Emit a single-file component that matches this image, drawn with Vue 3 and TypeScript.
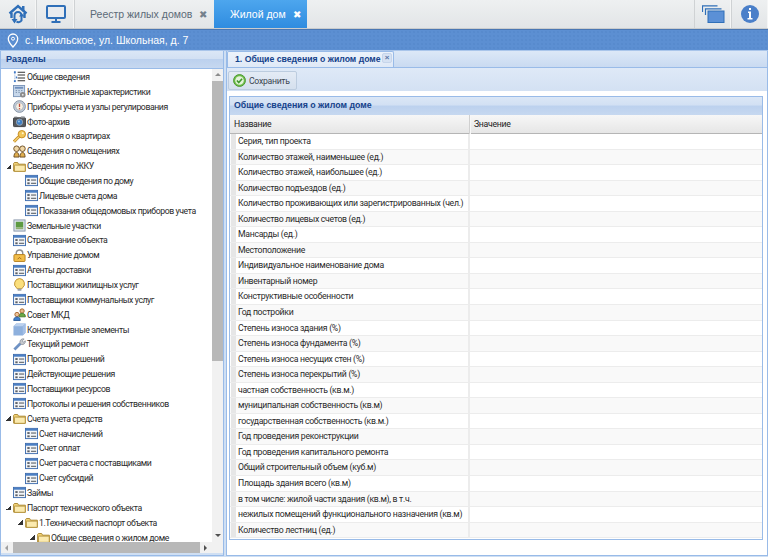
<script setup lang="ts">
interface TreeRow { label: string; icon: string; level: number; open?: boolean }
const tree: TreeRow[] = [
  { label: 'Общие сведения', icon: 'list', level: 0 },
  { label: 'Конструктивные характеристики', icon: 'calc', level: 0 },
  { label: 'Приборы учета и узлы регулирования', icon: 'gauge', level: 0 },
  { label: 'Фото-архив', icon: 'camera', level: 0 },
  { label: 'Сведения о квартирах', icon: 'key', level: 0 },
  { label: 'Сведения о помещениях', icon: 'people', level: 0 },
  { label: 'Сведения по ЖКУ', icon: 'folder', level: 0, open: true },
  { label: 'Общие сведения по дому', icon: 'form', level: 1 },
  { label: 'Лицевые счета дома', icon: 'form', level: 1 },
  { label: 'Показания общедомовых приборов учета', icon: 'form', level: 1 },
  { label: 'Земельные участки', icon: 'land', level: 0 },
  { label: 'Страхование объекта', icon: 'form', level: 0 },
  { label: 'Управление домом', icon: 'lock', level: 0 },
  { label: 'Агенты доставки', icon: 'form', level: 0 },
  { label: 'Поставщики жилищных услуг', icon: 'bulb', level: 0 },
  { label: 'Поставщики коммунальных услуг', icon: 'form', level: 0 },
  { label: 'Совет МКД', icon: 'council', level: 0 },
  { label: 'Конструктивные элементы', icon: 'cube', level: 0 },
  { label: 'Текущий ремонт', icon: 'wrench', level: 0 },
  { label: 'Протоколы решений', icon: 'form', level: 0 },
  { label: 'Действующие решения', icon: 'form', level: 0 },
  { label: 'Поставщики ресурсов', icon: 'form', level: 0 },
  { label: 'Протоколы и решения собственников', icon: 'form', level: 0 },
  { label: 'Счета учета средств', icon: 'folder', level: 0, open: true },
  { label: 'Счет начислений', icon: 'form', level: 1 },
  { label: 'Счет оплат', icon: 'form', level: 1 },
  { label: 'Счет расчета с поставщиками', icon: 'form', level: 1 },
  { label: 'Счет субсидий', icon: 'form', level: 1 },
  { label: 'Займы', icon: 'form', level: 0 },
  { label: 'Паспорт технического объекта', icon: 'folder', level: 0, open: true },
  { label: '1.Технический паспорт объекта', icon: 'folder', level: 1, open: true },
  { label: 'Общие сведения о жилом доме', icon: 'folder', level: 2, open: true },
]
const rows: string[] = [
  'Серия, тип проекта',
  'Количество этажей, наименьшее (ед.)',
  'Количество этажей, наибольшее (ед.)',
  'Количество подъездов (ед.)',
  'Количество проживающих или зарегистрированных (чел.)',
  'Количество лицевых счетов (ед.)',
  'Мансарды (ед.)',
  'Местоположение',
  'Индивидуальное наименование дома',
  'Инвентарный номер',
  'Конструктивные особенности',
  'Год постройки',
  'Степень износа здания (%)',
  'Степень износа фундамента (%)',
  'Степень износа несущих стен (%)',
  'Степень износа перекрытий (%)',
  'частная собственность (кв.м.)',
  'муниципальная собственность (кв.м)',
  'государственная собственность (кв.м.)',
  'Год проведения реконструкции',
  'Год проведения капитального ремонта',
  'Общий строительный объем (куб.м)',
  'Площадь здания всего (кв.м)',
  'в том числе: жилой части здания (кв.м), в т.ч.',
  'нежилых помещений функционального назначения (кв.м)',
  'Количество лестниц (ед.)',
]
function indent(level: number): string {
  return `${5 + level * 12}px`
}
</script>

<template>
  <div class="app">
    <svg class="defs" width="0" height="0" aria-hidden="true">
      <defs>
        <symbol id="i-list" viewBox="0 0 14 14">
          <path d="M2 1v12" stroke="#7a9bc8" fill="none" stroke-dasharray="1 1"/>
          <path d="M5 2.500h8M5 5.500h8M5 8.500h8M5 11.500h8" stroke="#333" stroke-width="1.100"/>
          <rect x="1" y="1.500" width="2" height="2" fill="#3f79c7"/>
          <rect x="3" y="7" width="1.500" height="2" fill="#3f79c7"/>
          <rect x="1" y="11" width="2" height="2" fill="#3f79c7"/>
        </symbol>
        <symbol id="i-calc" viewBox="0 0 14 14">
          <rect x=".5" y=".5" width="12" height="12" fill="#c7d7ea" stroke="#7a94b8"/>
          <rect x="2" y="2" width="9" height="2" fill="#6f8fbd"/>
          <path d="M3 6h1M6 6h1M9 6h1M3 8h1M6 8h1" stroke="#55708f"/>
          <circle cx="10.500" cy="10.500" r="3" fill="#8a8a8a"/>
          <circle cx="10.500" cy="10.500" r="1" fill="#e4e4e4"/>
        </symbol>
        <symbol id="i-gauge" viewBox="0 0 14 14">
          <circle cx="7" cy="7" r="6.300" fill="#c3cfdf" stroke="#7f8c9c"/>
          <circle cx="7" cy="7" r="4.200" fill="#f6f0e2" stroke="#a7b0bb"/>
          <path d="M7 4v3.500" stroke="#c0483a" stroke-width="1.400"/>
          <circle cx="7" cy="9.400" r=".8" fill="#c0483a"/>
        </symbol>
        <symbol id="i-camera" viewBox="0 0 14 14">
          <rect x=".5" y="3" width="13" height="9.500" rx="1" fill="#55585c" stroke="#3a3c40"/>
          <rect x="1.500" y="1.800" width="3" height="1.400" fill="#77797d"/>
          <rect x="8.500" y="1.500" width="4" height="2" fill="#8d9094"/>
          <circle cx="7" cy="7.700" r="3.400" fill="#3f7fc4" stroke="#98a4b0"/>
          <circle cx="6.400" cy="7" r="1" fill="#9cc7ee"/>
        </symbol>
        <symbol id="i-key" viewBox="0 0 14 14">
          <path d="M1 12.500l5.500-5.500" stroke="#c58a1f" stroke-width="3.200" fill="none"/>
          <path d="M1.300 12.300l5.300-5.300" stroke="#f4d377" stroke-width="1.400" fill="none"/>
          <circle cx="9.500" cy="4.500" r="4" fill="#f1c659" stroke="#c58a1f"/>
          <circle cx="10.500" cy="3.500" r="1.100" fill="#fff5d0"/>
        </symbol>
        <symbol id="i-people" viewBox="0 0 14 14">
          <circle cx="3.800" cy="4" r="3" fill="#f0d7a6" stroke="#6b4c22"/>
          <circle cx="10.200" cy="4" r="3" fill="#f0d7a6" stroke="#6b4c22"/>
          <path d="M1 13c0-3 1-5 2.800-5S6.500 10 6.500 13zM7.500 13c0-3 1-5 2.800-5S13 10 13 13z" fill="#dfae4f" stroke="#6b4c22"/>
        </symbol>
        <symbol id="i-folder" viewBox="0 0 14 14">
          <path d="M.7 3.500V12h12.600V4.500H6L5 2.700H1.500z" fill="#f3d479" stroke="#a98630"/>
          <path d="M1.500 12.200V6.500q0-1 1-1h10.700V12.200z" fill="#fbeaaf" stroke="#b4913a"/>
        </symbol>
        <symbol id="i-form" viewBox="0 0 14 14">
          <rect x=".5" y="1.500" width="13" height="11" fill="#f2f4f7" stroke="#3d6cae"/>
          <rect x="1" y="2" width="12" height="2" fill="#4a7fc4"/>
          <rect x="2.500" y="5.500" width="2.500" height="2" fill="#5a5f66"/>
          <rect x="2.500" y="9" width="2.500" height="2" fill="#5a5f66"/>
          <path d="M6.500 6.500h5.500M6.500 10h5.500" stroke="#40464d"/>
        </symbol>
        <symbol id="i-land" viewBox="0 0 14 14">
          <rect x="1" y="1" width="12" height="12" fill="#dde4ec" stroke="#8796a8"/>
          <rect x="3" y="3" width="8" height="6" fill="#5d9a42"/>
          <path d="M3 9h8v2H3z" fill="#8fb070"/>
        </symbol>
        <symbol id="i-lock" viewBox="0 0 14 14">
          <path d="M3.500 6.500V4.500a3.500 3.500 0 017 0v2" fill="none" stroke="#8d8f93" stroke-width="1.600"/>
          <rect x="1" y="6" width="12" height="7.500" rx="1" fill="#f1bd4a" stroke="#b57e1c"/>
          <path d="M5 11l2-2 2 2" stroke="#a3691a" fill="none"/>
        </symbol>
        <symbol id="i-bulb" viewBox="0 0 14 14">
          <path d="M7 .6a5.600 5.600 0 00-3.200 10l.7 1h5l.7-1A5.600 5.600 0 007 .6z" fill="#fbdf7c" stroke="#bc8f2c"/>
          <rect x="5" y="11.500" width="4" height="2.200" fill="#9aa0a8"/>
        </symbol>
        <symbol id="i-council" viewBox="0 0 14 14">
          <circle cx="9.800" cy="3.200" r="2.300" fill="#e9b98a" stroke="#a8662c"/>
          <path d="M6.500 9.500c0-3 1.500-3.800 3.300-3.800s3.500.8 3.500 3.800z" fill="#69a843" stroke="#477a2c"/>
          <circle cx="4.300" cy="7" r="2.300" fill="#efc59a" stroke="#a8662c"/>
          <path d="M.8 13.500c0-3 1.500-3.800 3.500-3.800s3.500.8 3.500 3.800z" fill="#3f7fcb" stroke="#2b5b98"/>
        </symbol>
        <symbol id="i-cube" viewBox="0 0 14 14">
          <path d="M3.500.5H13.500V10.500L10.500 13.500H.5V3.500z" fill="#8eb0dd"/>
          <path d="M3.500.5H13.500L10.500 3.500H.5z" fill="#bcd1ee"/>
          <path d="M13.500.5V10.500L10.500 13.500V3.500z" fill="#a4bfe6"/>
        </symbol>
        <symbol id="i-wrench" viewBox="0 0 14 14">
          <path d="M1.500 12.500L8 6" stroke="#6f92c4" stroke-width="3"/>
          <path d="M7.500 5a3.500 3.500 0 014.500-4L10 3.200l1 1.300 2.300-1.500A3.500 3.500 0 019 7z" fill="#c5c9cf" stroke="#80858c" stroke-width=".7"/>
        </symbol>
        <symbol id="i-save" viewBox="0 0 14 14">
          <circle cx="7" cy="7" r="6.400" fill="#6fbf4a" stroke="#4a9430"/>
          <circle cx="7" cy="7" r="4.600" fill="#e4f3da"/>
          <path d="M4.200 7l2 2.200 3.600-4" fill="none" stroke="#3f962d" stroke-width="1.700"/>
        </symbol>
      </defs>
    </svg>

    <header class="topbar">
      <button class="tool tool-home" aria-label="Дом">
        <svg width="20" height="20" viewBox="0 0 20 20">
          <path d="M1.500 9.500L10 2l8.500 7.500" fill="none" stroke="#2f6fb8" stroke-width="2.400"/>
          <rect x="14" y="2" width="2.500" height="5" fill="#2f6fb8"/>
          <path d="M3.500 9v5M16.500 9v5" stroke="#2f6fb8" stroke-width="2.400"/>
          <path d="M6.500 16.500V11.500a3.500 3.500 0 017 0" fill="none" stroke="#2f6fb8" stroke-width="2"/>
          <path d="M13.500 11.500v5a3.500 3.500 0 01-5 1" fill="none" stroke="#2f6fb8" stroke-width="2"/>
          <path d="M3.500 15h6l-3 4.500zM11 12.500h5.500l-3-3.500z" fill="#2f6fb8"/>
        </svg>
      </button>
      <button class="tool tool-screen" aria-label="Монитор">
        <svg width="20" height="18" viewBox="0 0 20 18">
          <rect x="1" y="1" width="18" height="12" rx="1" fill="#e8ebef" stroke="#2f6fb8" stroke-width="2"/>
          <path d="M10 14v2.500M5.500 17h9" stroke="#2f6fb8" stroke-width="2"/>
        </svg>
      </button>
      <div class="tab">Реестр жилых домов<span class="tab-x">✖</span></div>
      <div class="tab tab-active">Жилой дом<span class="tab-x">✖</span></div>
      <div class="spacer"></div>
      <button class="tool tool-right" aria-label="Окна">
        <svg width="23" height="19" viewBox="0 0 23 19">
          <path d="M.5 7V.8h15M3.500 10V3.800h16" fill="none" stroke="#2f6fb8" stroke-width="1.200"/>
          <rect x="6" y="6" width="16" height="11.500" fill="#5b90d6" stroke="#2f6fb8"/>
        </svg>
      </button>
      <button class="tool tool-right tool-last" aria-label="Информация">
        <svg width="18" height="18" viewBox="0 0 18 18">
          <circle cx="9" cy="9" r="9" fill="#4a7fc9"/>
          <path d="M7 6.500h3V13h1.500v1.500h-5V13H8V8H7z" fill="#fff"/>
          <rect x="8" y="3" width="2" height="2" fill="#fff"/>
        </svg>
      </button>
    </header>

    <div class="address">
      <svg width="12" height="15" viewBox="0 0 12 15">
        <path d="M6 1a4.700 4.700 0 00-4.700 4.700C1.300 9 6 14 6 14s4.700-5 4.700-8.300A4.700 4.700 0 006 1z" fill="none" stroke="#fff" stroke-width="1.300"/>
        <circle cx="6" cy="5.700" r="1.500" fill="none" stroke="#fff"/>
      </svg>
      <span>с. Никольское, ул. Школьная, д. 7</span>
    </div>

    <main class="work">
      <aside class="left">
        <div class="panel-head">Разделы</div>
        <div class="tree-box">
          <div class="tree">
            <div v-for="row in tree" :key="row.label" class="tree-row" :style="{ paddingLeft: indent(row.level) }">
              <span class="arrow" :class="{ shown: row.open }"></span>
              <svg class="tree-icon" width="13" height="13"><use :href="`#i-${row.icon}`" /></svg>
              <span class="tree-label">{{ row.label }}</span>
            </div>
          </div>
          <div class="vscroll">
            <span class="sc-up"></span>
            <span class="thumb-v"></span>
            <span class="sc-down"></span>
          </div>
          <div class="hscroll">
            <span class="sc-left"></span>
            <span class="thumb-h"></span>
            <span class="sc-right"></span>
          </div>
        </div>
      </aside>

      <section class="right">
        <div class="tabstrip">
          <div class="doc-tab">1. Общие сведения о жилом доме<span class="doc-x">×</span></div>
        </div>
        <div class="toolbar">
          <button class="save">
            <svg width="13" height="13"><use href="#i-save" /></svg>
            <span>Сохранить</span>
          </button>
        </div>
        <div class="content">
          <div class="grid-panel">
            <div class="grid-title">Общие сведения о жилом доме</div>
            <div class="grid-head">
              <div class="col-name">Название</div>
              <div class="col-val">Значение</div>
            </div>
            <div class="grid-body">
              <div v-for="(r, i) in rows" :key="r" class="grid-row" :class="{ alt: i % 2 === 1 }">
                <div class="cell-name"><span class="marker"></span><span class="cell-text">{{ r }}</span></div>
                <div class="cell-val"></div>
              </div>
            </div>
          </div>
        </div>
      </section>
    </main>
  </div>
</template>

<style>
html, body { margin: 0; background: #fff; }
</style>

<style scoped>
.app {
  width: 768px;
  height: 557px;
  overflow: hidden;
  display: flex;
  flex-direction: column;
  font-family: "Roboto", "Liberation Sans", sans-serif;
  font-size: 8.7px;
  letter-spacing: -0.3px;
  color: #222;
  background: #c6d9f0;
}
.defs { position: absolute; }
button { font: inherit; letter-spacing: inherit; border: 0; padding: 0; background: none; }

.topbar {
  height: 29px;
  display: flex;
  align-items: stretch;
  background: linear-gradient(#eef0f1, #e2e5e7);
  border-bottom: 1px solid #c9ccce;
  box-sizing: border-box;
}
.tool {
  display: flex;
  align-items: center;
  justify-content: center;
  border-right: 1px solid #cfd2d4;
  box-shadow: inset -1px 0 0 #f5f6f6;
}
.tool-home { width: 37px; }
.tool-screen { width: 38px; }
.tool-right { width: 37px; border-right: 0; border-left: 1px solid #cfd2d4; }
.tool-last { width: 37px; }
.tab {
  width: 139px;
  padding-left: 15px;
  box-sizing: border-box;
  display: flex;
  align-items: center;
  font-family: "Liberation Sans", sans-serif;
  font-size: 10.5px;
  letter-spacing: 0;
  color: #5c6a78;
  white-space: pre;
}
.tab-active {
  width: 93px;
  padding-left: 16px;
  color: #fff;
  background: linear-gradient(#4da6ee, #2f8ce0);
}
.tab-x {
  font-size: 10px;
  margin-left: 7px;
  color: #74808c;
}
.tab-active .tab-x { color: #fff; }
.spacer { flex: 1; }

.address {
  height: 21px;
  display: flex;
  align-items: center;
  gap: 6px;
  padding-left: 7px;
  color: #fff;
  font-family: "Liberation Sans", sans-serif;
  font-size: 10.5px;
  letter-spacing: 0;
  background-color: #5c8fd2;
  background-image: radial-gradient(#5384c7 .6px, transparent .8px);
  background-size: 4px 4px;
  border-top: 1px solid #4a77b3;
  box-sizing: border-box;
}

.work {
  flex: 1;
  min-height: 0;
  display: flex;
  gap: 1px;
  padding: 0 0 1px 0;
  background: #cfdff3;
  border-top: 1px solid #a9c5ea;
}
.left {
  width: 224px;
  display: flex;
  flex-direction: column;
  border-left: 1px solid #99bbe8;
  border-right: 1px solid #99bbe8;
  border-bottom: 1px solid #99bbe8;
  box-sizing: border-box;
}
.panel-head {
  height: 18px;
  flex: none;
  line-height: 17px;
  padding-left: 5px;
  font-family: "Liberation Sans", sans-serif;
  font-weight: 700;
  font-size: 9px;
  letter-spacing: 0;
  color: #15428b;
  background: linear-gradient(#dbe7f6 0, #d2e0f3 45%, #bcd1ee 50%, #c6d8f0 100%);
  border-bottom: 1px solid #99bbe8;
  box-sizing: border-box;
}
.tree-box {
  flex: 1;
  min-height: 0;
  display: grid;
  grid-template-columns: 1fr 11px;
  grid-template-rows: 1fr 11px;
  background: #fff;
  margin-bottom: 2px;
}
.tree { overflow: hidden; min-width: 0; padding-top: 0.5px; }
.tree-row {
  height: 14.87px;
  display: flex;
  align-items: center;
  white-space: nowrap;
  box-sizing: border-box;
}
.arrow {
  width: 5px;
  height: 5px;
  margin-right: 2px;
  flex: none;
}
.arrow.shown {
  background: linear-gradient(135deg, transparent 50%, #333 50%);
}
.tree-icon { flex: none; margin-right: 1px; }
.tree-label { color: #2a2a2a; letter-spacing: -0.42px; }
.vscroll {
  background: #f1f1f1;
  display: flex;
  flex-direction: column;
  align-items: center;
}
.sc-up, .sc-down {
  height: 12px;
  flex: none;
  position: relative;
  width: 100%;
}
.sc-up::before, .sc-down::before {
  content: "";
  position: absolute;
  left: 3px;
  top: 4px;
  border: 3px solid transparent;
  border-top: 0;
  border-bottom: 3px solid #8c8c8c;
}
.sc-down::before { border-bottom: 0; border-top: 3px solid #505050; }
.thumb-v { width: 100%; height: 280px; background: #b8b8b8; }
.sc-down { margin-top: auto; }
.hscroll {
  grid-column: 1 / 3;
  background: #f1f1f1;
  display: flex;
  align-items: center;
}
.sc-left, .sc-right { width: 12px; height: 100%; flex: none; position: relative; }
.sc-left::before, .sc-right::before {
  content: "";
  position: absolute;
  top: 3px;
  left: 4px;
  border: 3px solid transparent;
  border-left: 0;
  border-right: 3px solid #a0a0a0;
}
.sc-right::before { border-right: 0; border-left: 3px solid #505050; }
.thumb-h { width: 187px; height: 100%; background: #b8b8b8; }
.sc-right { margin-left: auto; margin-right: 11px; }

.right {
  flex: 1;
  min-width: 0;
  display: flex;
  flex-direction: column;
  border-left: 1px solid #99bbe8;
  border-right: 1px solid #99bbe8;
  border-bottom: 1px solid #99bbe8;
  margin-left: 1px;
  background: #fff;
}
.tabstrip {
  height: 17px;
  flex: none;
  background: linear-gradient(#dce8f7, #c9daf1);
  border-bottom: 1px solid #99bbe8;
  display: flex;
  align-items: flex-end;
  box-sizing: border-box;
}
.doc-tab {
  height: 16px;
  width: 167px;
  box-sizing: border-box;
  padding-left: 7px;
  font-family: "Liberation Sans", sans-serif;
  font-weight: 700;
  line-height: 15px;
  letter-spacing: 0;
  color: #15428b;
  font-size: 8.7px;
  background: linear-gradient(#edf3fb, #dfe9f7);
  border: 1px solid #99bbe8;
  border-bottom: 0;
  border-radius: 2px 2px 0 0;
  position: relative;
  white-space: nowrap;
}
.doc-x {
  position: absolute;
  right: 1px;
  top: 1px;
  width: 8px;
  height: 8px;
  line-height: 8px;
  text-align: center;
  font-size: 8px;
  color: #5876a5;
  background: #d6e2f3;
  border: 1px solid #c6d5eb;
  border-radius: 2px;
}
.toolbar {
  height: 23px;
  flex: none;
  padding: 3px 1px 1px;
  box-sizing: border-box;
  background: linear-gradient(#dfe9f7, #d3e1f3);
  display: flex;
}
.save {
  width: 69px;
  display: flex;
  align-items: center;
  gap: 3px;
  padding-left: 4px;
  color: #3a4450;
  background: linear-gradient(#e4ebf5, #d5e0ee);
  border: 1px solid #bcccdf;
  border-radius: 2px;
  box-sizing: border-box;
}
.content {
  flex: 1;
  min-height: 0;
  padding: 5px 4px 15px 2px;
  display: flex;
  background: #fff;
}
.grid-panel {
  flex: 1;
  min-width: 0;
  display: flex;
  flex-direction: column;
  border: 1px solid #99bbe8;
  box-sizing: border-box;
}
.grid-title {
  height: 18px;
  flex: none;
  line-height: 16px;
  padding-left: 4px;
  font-family: "Liberation Sans", sans-serif;
  font-weight: 700;
  font-size: 8.8px;
  letter-spacing: 0;
  color: #15428b;
  background: linear-gradient(#dbe7f6 0, #d2e0f3 45%, #bcd1ee 50%, #c6d8f0 100%);
}
.grid-head {
  display: grid;
  grid-template-columns: 240px 1fr;
  height: 19px;
  flex: none;
  background: linear-gradient(#f7f7f7, #e6e6e6);
  border-bottom: 1px solid #b5b5b5;
  box-sizing: border-box;
}
.col-name, .col-val { line-height: 19px; padding-left: 4px; color: #222; }
.col-name { border-right: 1px solid #d0d0d0; box-shadow: 1px 0 0 #f7f7f7; }
.grid-row {
  display: grid;
  grid-template-columns: 240px 1fr;
  height: 15.56px;
  background: #fff;
  border-bottom: 1px solid #ececec;
  box-sizing: border-box;
}
.grid-row.alt { background: #f9f9f9; }
.cell-name {
  display: flex;
  align-items: stretch;
  border-right: 2px solid #ececec;
  white-space: nowrap;
  overflow: hidden;
}
.marker { width: 5px; flex: none; background: #e6e6e6; margin-right: 2px; margin-left: 1px; }
.cell-text { line-height: 14px; color: #2a2a2a; }
</style>
